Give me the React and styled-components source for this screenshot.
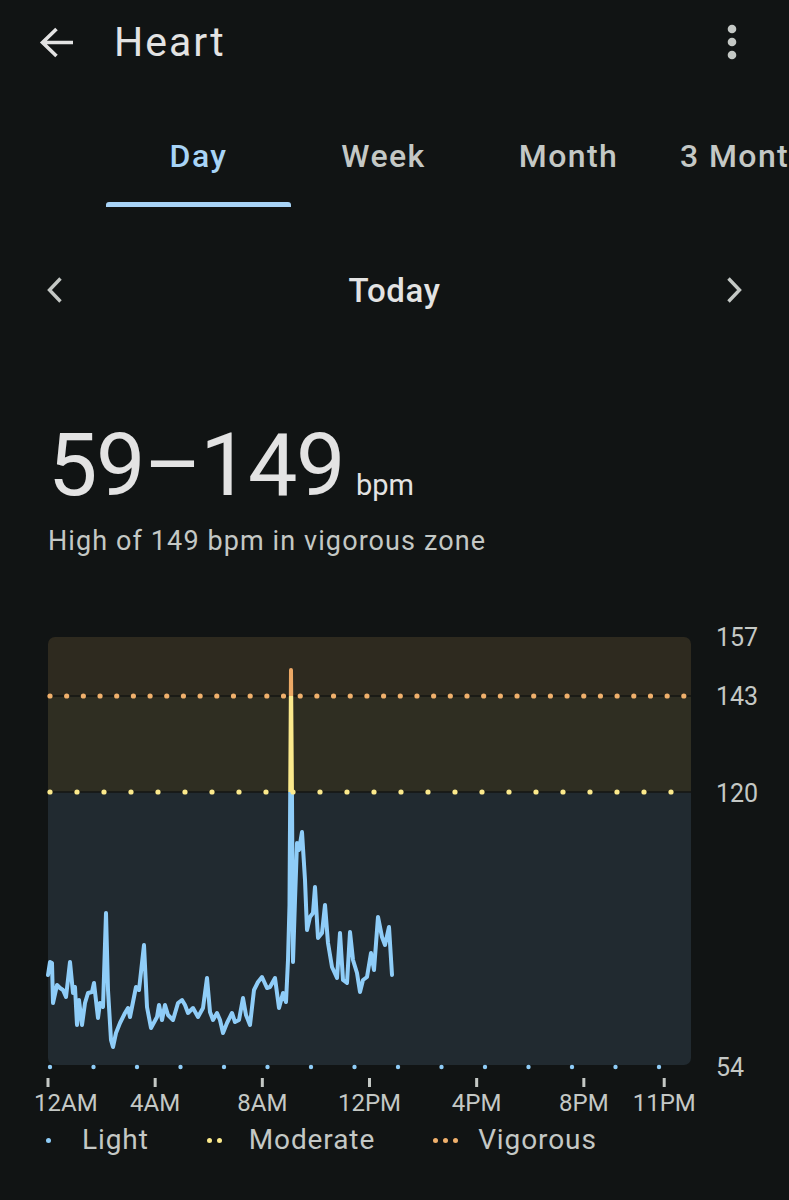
import React from "react";
import styled, { createGlobalStyle } from "styled-components";

const Global = createGlobalStyle`
  html, body { margin: 0; padding: 0; background: #111414; }
  body { font-family: Roboto, "Noto Sans", Arial, sans-serif; color: #e3e3e3; }
  * { box-sizing: border-box; }
`;

const Page = styled.div`
  width: 789px;
  height: 1200px;
  background: #111414;
  overflow: hidden;
  display: flex;
  flex-direction: column;
`;

const TopBar = styled.div`
  height: 84px;
  display: flex;
  align-items: center;
  padding: 0 51px 0 33px;
`;

const Title = styled.h1`
  margin: 0 0 0 33px;
  font-size: 41px;
  font-weight: 400;
  letter-spacing: 2px;
  color: #e3e3e3;
  flex: 1;
`;

const IconSvg = styled.svg`
  display: block;
  flex: none;
`;

const Tabs = styled.div`
  margin-top: 36px;
  height: 87px;
  display: flex;
  padding-left: 106px;
  overflow: hidden;
  white-space: nowrap;
`;

const Tab = styled.div`
  flex: none;
  width: 185px;
  height: 87px;
  display: flex;
  flex-direction: column;
  justify-content: flex-end;
  align-items: ${(p) => (p.$last ? "flex-start" : "center")};
  padding-left: ${(p) => (p.$last ? "19px" : "0")};
`;

const TabLabel = styled.span`
  font-size: 32px;
  line-height: 40px;
  font-weight: 500;
  letter-spacing: 1.4px;
  color: ${(p) => (p.$active ? "#a8d4f7" : "#c4c8c5")};
  margin-bottom: 26px;
`;

const Underline = styled.div`
  width: 100%;
  height: 5px;
  border-radius: 3px 3px 0 0;
  background: ${(p) => (p.$active ? "#a8d4f7" : "transparent")};
  align-self: stretch;
`;

const DateNav = styled.div`
  margin-top: 58px;
  height: 50px;
  display: flex;
  align-items: center;
  justify-content: space-between;
  padding: 0 44px;
`;

const DateLabel = styled.span`
  font-size: 33px;
  font-weight: 500;
  letter-spacing: 0.6px;
  color: #e3e3e3;
`;

const Range = styled.div`
  margin-top: 106px;
  padding-left: 48px;
  display: flex;
  align-items: baseline;
  height: 88px;
`;

const RangeValue = styled.span`
  font-size: 88px;
  line-height: 88px;
  font-weight: 400;
  letter-spacing: -1.5px;
  color: #e3e3e3;
`;

const Unit = styled.span`
  margin-left: 12px;
  font-size: 29px;
  color: #e3e3e3;
`;

const Subtitle = styled.div`
  margin-top: 16px;
  padding-left: 48px;
  font-size: 27px;
  line-height: 32px;
  letter-spacing: 1.1px;
  color: #c4c8c5;
`;

const ChartSvg = styled.svg`
  display: block;
  margin-top: 63px;
  flex: none;
`;

const Legend = styled.div`
  height: 30px;
  display: flex;
  align-items: center;
  padding-left: 46px;
  gap: 58px;
`;

const LegendItem = styled.div`
  display: flex;
  align-items: center;
`;

const Marker = styled.div`
  display: flex;
  gap: 5px;
  width: ${(p) => p.$w}px;
`;

const Dot = styled.span`
  width: 5px;
  height: 5px;
  border-radius: 50%;
  background: ${(p) => p.$c};
`;

const LegendText = styled.span`
  font-size: 28px;
  line-height: 30px;
  color: #c4c8c5;
  letter-spacing: 0.9px;
`;

const pts = [
  [48,975],[50,962],[52,963],[53,1003],[57,985],[60,988],[63,990],[66,997],[70,962],[73,993],[75,987],[77,1025],[79,1000],[82,1025],[85,1003],[88,993],[92,992],[94,983],[98,1018],[100,1003],[103,1007],[106,913],[108,990],[111,1040],[113,1047],[116,1033],[120,1023],[125,1013],[128,1008],[130,1017],[136,987],[139,990],[144,945],[147,1007],[151,1028],[157,1017],[159,1005],[162,1020],[165,1005],[168,1015],[173,1020],[178,1003],[182,1000],[185,1005],[188,1013],[193,1008],[198,1017],[203,1008],[207,978],[210,1012],[213,1020],[217,1013],[220,1020],[223,1033],[227,1023],[232,1013],[235,1022],[239,1020],[243,998],[246,1015],[250,1025],[254,990],[258,982],[262,977],[267,988],[270,987],[275,978],[279,1008],[283,993],[286,1002],[288,960],[289.5,905],[291,670],[292,800],[293,962],[295,900],[297,843],[299,850],[302,832],[305,880],[307,930],[310,917],[313,913],[315,887],[318,938],[322,933],[325,905],[328,943],[332,967],[337,978],[340,933],[343,980],[347,983],[350,932],[353,960],[357,973],[360,992],[363,980],[367,977],[371,953],[374,970],[378,917],[382,937],[385,945],[389,927],[392,975]
];

const LEFT = 48;
const RIGHT = 691;
const TOP = 637;
const BOTTOM = 1065;
const Y_VIG = 696;
const Y_MOD = 792;

const orangeDots = Array.from({ length: 39 }, (_, i) => 50 + i * 16.68);
const yellowDots = Array.from({ length: 24 }, (_, i) => 50 + i * 27);
const blueDots = Array.from({ length: 15 }, (_, i) => 50 + i * 43.5);
const HOUR = (RIGHT - LEFT) / 24;
const ticks = [
  { h: 0, label: "12AM", anchor: "start", lx: 34 },
  { h: 4, label: "4AM" },
  { h: 8, label: "8AM" },
  { h: 12, label: "12PM" },
  { h: 16, label: "4PM" },
  { h: 20, label: "8PM" },
  { h: 23, label: "11PM" },
];
const yLabels = [
  { v: "157", y: 646 },
  { v: "143", y: 705 },
  { v: "120", y: 802 },
  { v: "54", y: 1076 },
];

const ORANGE = "#f0b06c";
const YELLOW = "#fbe98c";
const BLUE = "#8fcdf8";
const fracV = (Y_VIG - TOP) / (BOTTOM - TOP);
const fracM = (Y_MOD - TOP) / (BOTTOM - TOP);

function HeartChart() {
  return (
    <ChartSvg width="789" height="505" viewBox="0 620 789 505">
      <defs>
        <clipPath id="plotClip">
          <rect x={LEFT} y={TOP} width={RIGHT - LEFT} height={BOTTOM - TOP} rx="7" />
        </clipPath>
        <linearGradient id="zoneStroke" gradientUnits="userSpaceOnUse" x1="0" y1={TOP} x2="0" y2={BOTTOM}>
          <stop offset="0" stopColor="#e9a464" />
          <stop offset={fracV} stopColor="#eeaa66" />
          <stop offset={fracV} stopColor={YELLOW} />
          <stop offset={fracM} stopColor={YELLOW} />
          <stop offset={fracM} stopColor={BLUE} />
          <stop offset="1" stopColor={BLUE} />
        </linearGradient>
      </defs>
      <g clipPath="url(#plotClip)">
        <rect x={LEFT} y={TOP} width={RIGHT - LEFT} height={Y_VIG - TOP} fill="#2e2a1f" />
        <rect x={LEFT} y={Y_VIG} width={RIGHT - LEFT} height={Y_MOD - Y_VIG} fill="#2f2e22" />
        <rect x={LEFT} y={Y_MOD} width={RIGHT - LEFT} height={BOTTOM - Y_MOD} fill="#212a30" />
      </g>
      <line x1={LEFT} x2={RIGHT} y1={Y_VIG} y2={Y_VIG} stroke="#141613" strokeWidth="1.6" />
      <line x1={LEFT} x2={RIGHT} y1={Y_MOD} y2={Y_MOD} stroke="#141613" strokeWidth="1.6" />
      <polyline
        points={pts.map((p) => p.join(",")).join(" ")}
        fill="none"
        stroke="url(#zoneStroke)"
        strokeWidth="4"
        strokeLinejoin="round"
        strokeLinecap="round"
      />
      {orangeDots.map((x) => (
        <circle key={"o" + x} cx={x} cy={Y_VIG} r="2.6" fill={ORANGE} />
      ))}
      {yellowDots.map((x) => (
        <circle key={"y" + x} cx={x} cy={Y_MOD} r="2.6" fill={YELLOW} />
      ))}
      {blueDots.map((x) => (
        <circle key={"b" + x} cx={x} cy={1067} r="2.2" fill={BLUE} />
      ))}
      {ticks.map((t) => {
        const x = LEFT + t.h * HOUR;
        return (
          <g key={t.label}>
            <rect x={x - 1.5} y={1078} width="3" height="9" fill="#c4c8c5" />
            <text
              x={t.lx ?? x}
              y={1111}
              textAnchor={t.anchor ?? "middle"}
              fontFamily="Roboto, sans-serif"
              fontSize="24"
              fill="#c4c8c5"
            >
              {t.label}
            </text>
          </g>
        );
      })}
      {yLabels.map((l) => (
        <text key={l.v} x="716" y={l.y} fontFamily="Roboto, sans-serif" fontSize="25" fill="#c4c8c5">
          {l.v}
        </text>
      ))}
    </ChartSvg>
  );
}

export default function App() {
  return (
    <>
      <Global />
      <Page>
        <TopBar>
          <IconSvg width="48" height="48" viewBox="0 0 48 48">
            <path d="M40 24.5H10.5 M23.5 11 L9.5 24.5 L23.5 38" fill="none" stroke="#e3e3e3" strokeWidth="3.6" strokeLinecap="butt" strokeLinejoin="miter" />
          </IconSvg>
          <Title>Heart</Title>
          <IconSvg width="12" height="40" viewBox="0 0 12 40">
            <circle cx="6" cy="7" r="4.3" fill="#c4c8c5" />
            <circle cx="6" cy="20" r="4.3" fill="#c4c8c5" />
            <circle cx="6" cy="33" r="4.3" fill="#c4c8c5" />
          </IconSvg>
        </TopBar>

        <Tabs>
          {["Day", "Week", "Month", "3 Months"].map((t, i) => (
            <Tab key={t} $last={i === 3}>
              <TabLabel $active={i === 0}>{t}</TabLabel>
              <Underline $active={i === 0} />
            </Tab>
          ))}
        </Tabs>

        <DateNav>
          <IconSvg width="20" height="30" viewBox="0 0 20 30">
            <polyline points="16.5,3.5 5.5,15 16.5,26.5" fill="none" stroke="#c4c8c5" strokeWidth="3.4" />
          </IconSvg>
          <DateLabel>Today</DateLabel>
          <IconSvg width="20" height="30" viewBox="0 0 20 30">
            <polyline points="3.5,3.5 14.5,15 3.5,26.5" fill="none" stroke="#c4c8c5" strokeWidth="3.4" />
          </IconSvg>
        </DateNav>

        <Range>
          <RangeValue>59–149</RangeValue>
          <Unit>bpm</Unit>
        </Range>
        <Subtitle>High of 149 bpm in vigorous zone</Subtitle>

        <HeartChart />

        <Legend>
          <LegendItem>
            <Marker $w={36}>
              <Dot $c={BLUE} />
            </Marker>
            <LegendText>Light</LegendText>
          </LegendItem>
          <LegendItem>
            <Marker $w={42}>
              <Dot $c={YELLOW} />
              <Dot $c={YELLOW} />
            </Marker>
            <LegendText>Moderate</LegendText>
          </LegendItem>
          <LegendItem>
            <Marker $w={45}>
              <Dot $c={ORANGE} />
              <Dot $c={ORANGE} />
              <Dot $c={ORANGE} />
            </Marker>
            <LegendText>Vigorous</LegendText>
          </LegendItem>
        </Legend>
      </Page>
    </>
  );
}
